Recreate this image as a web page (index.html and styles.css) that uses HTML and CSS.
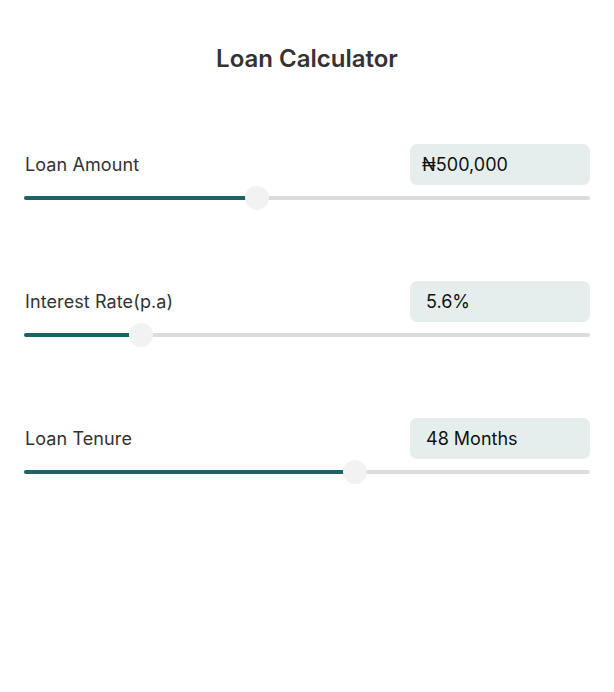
FILE: index.html
```html
<!DOCTYPE html>
<html>
<head>
<meta charset="utf-8">
<link rel="stylesheet" href="styles.css">
</head>
<body>
<main class="page">
  <h1 class="title">Loan Calculator</h1>
  <section class="fields">
    <div class="field">
      <div class="field-head">
        <span class="label">Loan Amount</span>
        <div class="value naira">₦500,000</div>
      </div>
      <div class="slider">
        <div class="track"></div>
        <div class="fill" style="width:233px"></div>
        <div class="thumb" style="left:221px"></div>
      </div>
    </div>
    <div class="field">
      <div class="field-head">
        <span class="label">Interest Rate(p.a)</span>
        <div class="value">5.6%</div>
      </div>
      <div class="slider">
        <div class="track"></div>
        <div class="fill" style="width:117px"></div>
        <div class="thumb" style="left:105px"></div>
      </div>
    </div>
    <div class="field">
      <div class="field-head">
        <span class="label">Loan Tenure</span>
        <div class="value">48 Months</div>
      </div>
      <div class="slider">
        <div class="track"></div>
        <div class="fill" style="width:331px"></div>
        <div class="thumb" style="left:319px"></div>
      </div>
    </div>
  </section>
</main>
</body>
</html>
```
FILE: styles.css
```css
* { box-sizing: border-box; }
html, body { margin: 0; padding: 0; background: #ffffff; }
body {
  font-family: Inter, "Noto Sans", "DejaVu Sans", sans-serif;
  color: #333333;
}
.page {
  padding: 44px 24px 0 24px;
}
.title {
  margin: 0;
  text-align: center;
  font-size: 24px;
  line-height: 30px;
  font-weight: 600;
  color: #333333;
}
.fields {
  margin-top: 70px;
  display: flex;
  flex-direction: column;
  gap: 71px;
}
.field-head {
  display: flex;
  justify-content: space-between;
  align-items: center;
}
.label {
  font-size: 18px;
  line-height: 22px;
  color: #333333;
  padding-left: 1px;
  padding-top: 1px;
  letter-spacing: 0.1px;
}
.value {
  width: 180px;
  height: 41px;
  background: #e6eeed;
  border-radius: 7px;
  padding: 0 16px;
  display: flex;
  align-items: center;
  font-size: 18px;
  color: #111111;
}
.value.naira { padding-left: 12px; }
.slider {
  position: relative;
  height: 24px;
  margin-top: 1px;
}
.track {
  position: absolute;
  left: 0;
  right: 0;
  top: 10px;
  height: 4px;
  border-radius: 2px;
  background: #dcdcdc;
}
.fill {
  position: absolute;
  left: 0;
  top: 10px;
  height: 4px;
  border-radius: 2px;
  background: #1b6367;
}
.thumb {
  position: absolute;
  top: 0;
  width: 24px;
  height: 24px;
  border-radius: 50%;
  background: #f2f2f2;
}
```
